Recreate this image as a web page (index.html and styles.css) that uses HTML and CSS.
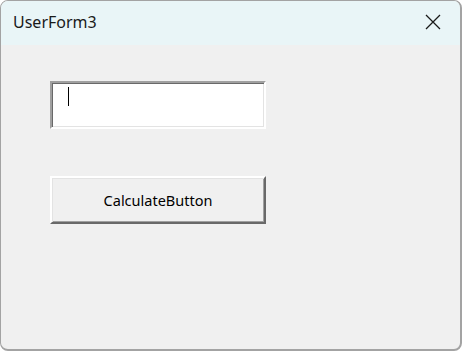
FILE: index.html
```html
<!DOCTYPE html>
<html>
<head>
<meta charset="utf-8">
<link rel="stylesheet" href="styles.css">
</head>
<body>
<div class="window">
  <div class="titlebar">
    <span class="title">UserForm3</span>
    <svg class="close" width="16" height="16" viewBox="0 0 16 16"><path d="M1 1 L15 15 M15 1 L1 15" stroke="#1a1a1a" stroke-width="1.3" fill="none"/></svg>
  </div>
  <div class="client">
    <div class="textbox"><span class="caret"></span></div>
    <div class="button">CalculateButton</div>
  </div>
</div>
</body>
</html>
```
FILE: styles.css
```css
html, body {
  margin: 0;
  padding: 0;
  width: 462px;
  height: 351px;
  background: #ffffff;
  overflow: hidden;
}
.window {
  box-sizing: border-box;
  width: 462px;
  height: 351px;
  border: 1px solid #a3a3a3;
  border-bottom-width: 2px;
  border-right-width: 2px;
  border-radius: 8px;
  background: #f0f0f0;
  overflow: hidden;
  display: flex;
  flex-direction: column;
  font-family: "Segoe UI", "Noto Sans", "Open Sans", sans-serif;
}
.titlebar {
  height: 44px;
  flex: none;
  background: #e9f5f7;
  display: flex;
  align-items: center;
  justify-content: space-between;
  padding: 0 19px 0 12px;
}
.title {
  font-size: 16px;
  color: #1a1a1a;
  margin-top: -2px;
}
.close {
  margin-top: -2px;
}
.client {
  flex: 1;
  padding: 36px 0 0 49px;
  display: flex;
  flex-direction: column;
  gap: 47px;
}
.textbox {
  box-sizing: border-box;
  width: 216px;
  height: 48px;
  background: #ffffff;
  border-style: solid;
  border-width: 2px;
  border-color: #a0a0a0 #ffffff #ffffff #a0a0a0;
  box-shadow: inset 1px 1px 0 #696969, inset -1px -1px 0 #e3e3e3;
  padding: 4px 0 0 16px;
}
.caret {
  display: block;
  width: 1px;
  height: 19px;
  background: #000000;
}
.button {
  box-sizing: border-box;
  width: 216px;
  height: 48px;
  background: #f0f0f0;
  border-style: solid;
  border-width: 2px;
  border-color: #ffffff #696969 #696969 #ffffff;
  box-shadow: inset 1px 1px 0 #e3e3e3, inset -1px -1px 0 #a0a0a0;
  display: flex;
  align-items: center;
  justify-content: center;
  font-size: 14.5px;
  color: #000000;
}
```
